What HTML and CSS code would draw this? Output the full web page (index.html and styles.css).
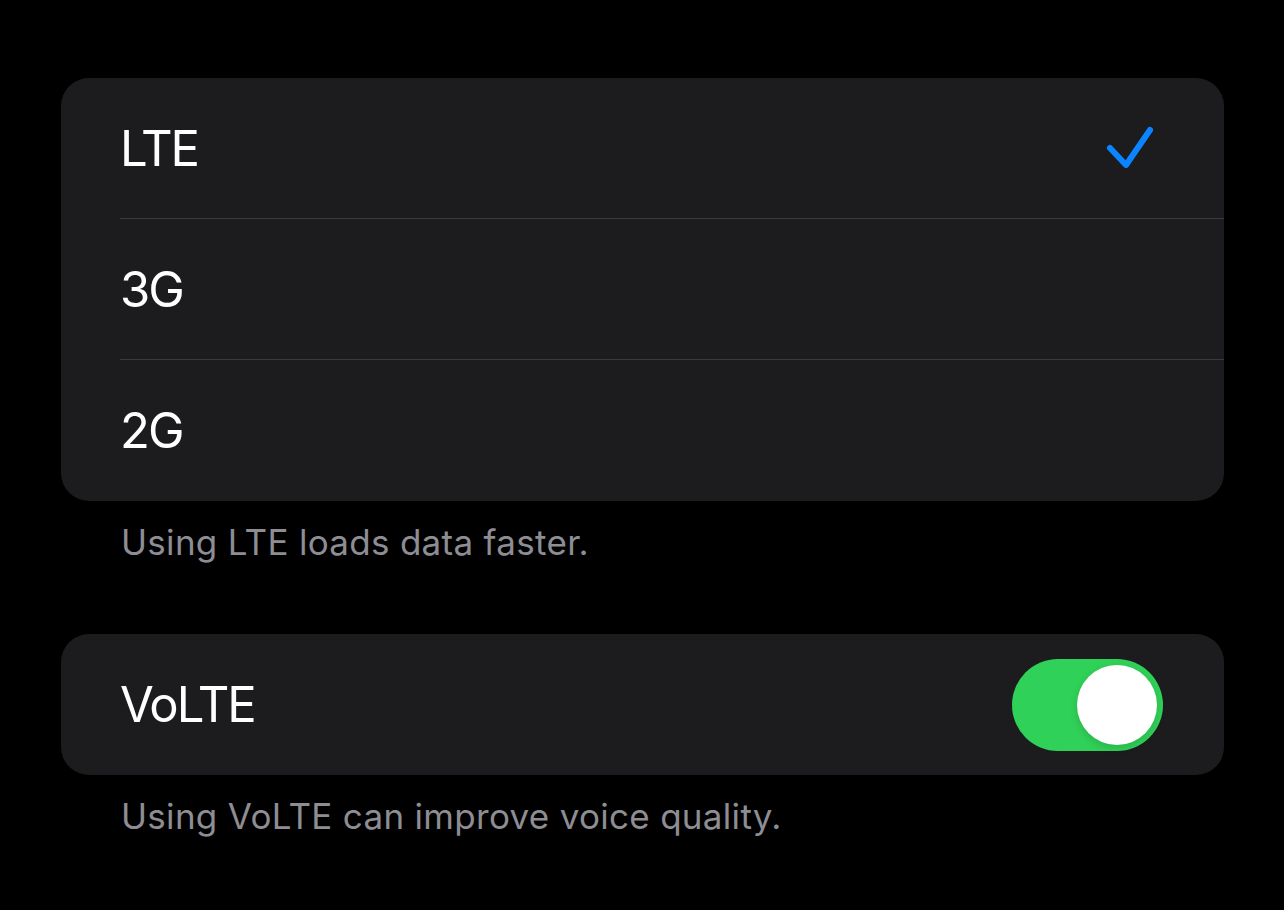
FILE: index.html
```html
<!DOCTYPE html>
<html lang="en">

<head>
    <meta charset="UTF-8">
    <meta name="viewport" content="width=device-width, initial-scale=1.0">
    <title>Voice &amp; Data</title>
    <link rel="stylesheet" href="styles.css">
</head>

<body>

    <main class="settings">

        <ul class="group">
            <li class="row">
                <div class="row-inner">
                    <span class="label">LTE</span>
                    <svg class="check" width="48" height="46" viewBox="0 0 48 46">
                        <path d="M4 23 L20 40 L44 5" fill="none" stroke="#0a84ff" stroke-width="6"
                            stroke-linecap="round" stroke-linejoin="round" />
                    </svg>
                </div>
            </li>
            <li class="row">
                <div class="row-inner">
                    <span class="label">3G</span>
                </div>
            </li>
            <li class="row">
                <div class="row-inner">
                    <span class="label">2G</span>
                </div>
            </li>
        </ul>
        <p class="footer">Using LTE loads data faster.</p>

        <ul class="group">
            <li class="row">
                <div class="row-inner">
                    <span class="label">VoLTE</span>
                    <span class="toggle on"><span class="knob"></span></span>
                </div>
            </li>
        </ul>
        <p class="footer">Using VoLTE can improve voice quality.</p>

    </main>

</body>

</html>
```

FILE: styles.css
```css
body {
    margin: 0;
    background: #000;
    color: #fff;
    font-family: Inter, "Noto Sans", "Liberation Sans", sans-serif;
    height: 100vh;
}

.settings {
    padding: 78px 60px 0 61px;
}

.group {
    list-style: none;
    margin: 0;
    padding: 0;
    background: #1c1c1e;
    border-radius: 28px;
    overflow: hidden;
}

.row {
    padding-left: 59px;
}

.row-inner {
    height: 140px;
    display: flex;
    align-items: center;
    justify-content: space-between;
    border-bottom: 1px solid #3a3a3d;

    .row:last-child & {
        border-bottom: 0;
        height: 141px;
    }
}

.label {
    font-size: 49px;
    letter-spacing: -2px;
}

.check {
    margin-right: 70px;
}

.footer {
    margin: 0;
    padding: 20px 0 71px 60px;
    font-size: 35px;
    line-height: 42px;
    color: #8d8d93;
    letter-spacing: 0.3px;
}

.toggle {
    width: 151px;
    height: 92px;
    border-radius: 46px;
    background: #39393d;
    margin-right: 61px;
    display: flex;
    align-items: center;
    padding: 0 6px;
    box-sizing: border-box;

    &.on {
        background: #30d158;
        justify-content: flex-end;
    }

    .knob {
        width: 80px;
        height: 80px;
        border-radius: 50%;
        background: #fff;
        box-shadow: 0 3px 8px rgba(0, 0, 0, 0.15);
    }
}
```
